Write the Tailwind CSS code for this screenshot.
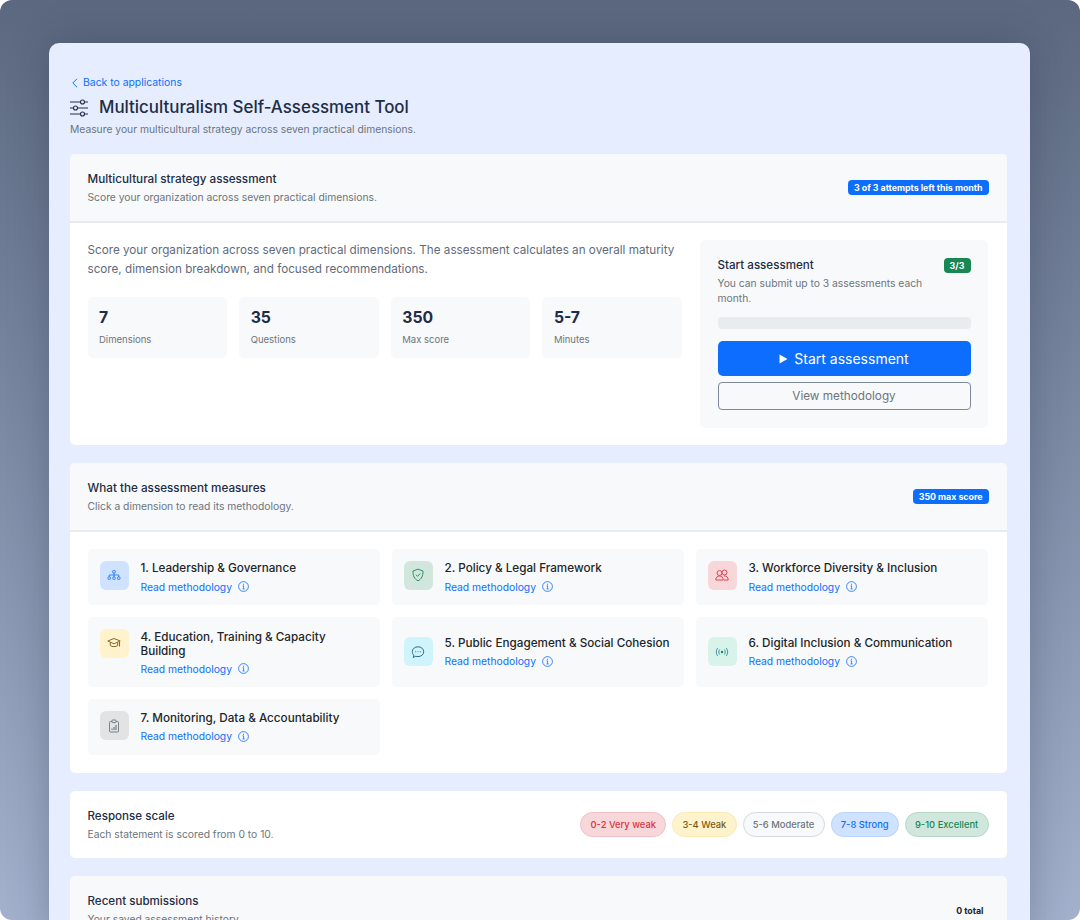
<!DOCTYPE html>
<html lang="en">

<head>
  <meta charset="UTF-8">
  <meta name="viewport" content="width=device-width, initial-scale=1">
  <script src="https://cdn.jsdelivr.net/npm/@tailwindcss/browser@4"></script>
  <title>Multiculturalism Self-Assessment Tool</title>
</head>

<body class="bg-white font-['Inter',sans-serif]">
  <div class="w-[1080px] h-[920px] overflow-hidden rounded-[12px] bg-gradient-to-b from-[#5b6880] to-[#a3b1cd] pt-[43px] pl-[49px]">
    <div class="w-[981px] min-h-[900px] rounded-t-[10px] bg-[#e6edff] pl-[21px] pr-[23px] pt-[33px] shadow-[0_0_40px_rgba(30,41,59,0.3)]">

      <a class="flex items-center gap-[4px] h-[13px] text-[10.4px] leading-[13px] text-[#0d6efd]">
        <svg class="w-[8px] h-[10px] ml-[1px]" viewBox="0 0 8 10" fill="none" stroke="#0d6efd" stroke-width="1"><path d="M6 .8 1.800 5 6 9.200" /></svg>
        Back to applications
      </a>
      <div class="flex items-center gap-[11px] mt-[7px] h-[23px]">
        <svg class="w-[18px] h-[18px]" viewBox="0 0 18 18" fill="none" stroke="#212c45" stroke-width="1.100">
          <path d="M0 3h10.500M14.500 3H18M0 9h3.500M7.500 9H18M0 15h10.500M14.500 15H18" />
          <circle cx="12.500" cy="3" r="2" />
          <circle cx="5.500" cy="9" r="2" />
          <circle cx="12.500" cy="15" r="2" />
        </svg>
        <h1 class="text-[16.9px] leading-[23px] font-medium text-[#212c45]">Multiculturalism Self-Assessment Tool</h1>
      </div>
      <p class="mt-[3px] text-[10.3px] leading-[14px] text-[#6c757d]">Measure your multicultural strategy across seven practical dimensions.</p>

      <!-- assessment intro -->
      <section class="mt-[18px] bg-white rounded-[5px] overflow-hidden">
        <div class="h-[69px] bg-[#f8f9fa] border-b-2 border-[#e9ecef] pl-[17.5px] pr-[18.5px] flex items-center justify-between">
          <div>
            <h2 class="text-[11.7px] leading-[16px] font-medium text-[#212c45]">Multicultural strategy assessment</h2>
            <p class="mt-[3px] text-[10.3px] leading-[14px] text-[#6c757d]">Score your organization across seven practical dimensions.</p>
          </div>
          <span class="h-[15px] px-[6px] rounded-[4px] bg-[#0d6efd] text-white text-[8.8px] leading-[15px] font-bold">3 of 3 attempts left this month</span>
        </div>
        <div class="flex gap-[18px] pt-[16.5px] px-[17.5px] pb-[17.5px]">
          <div class="w-[594.5px]">
            <p class="mt-[1px] text-[11.7px] leading-[19px] text-[#5f6b7c]">Score your organization across seven practical dimensions. The assessment calculates an overall maturity score, dimension breakdown, and focused recommendations.</p>
            <div class="grid grid-cols-4 gap-[12px] mt-[18px]">
              <div class="h-[61px] rounded-[5px] bg-[#f8f9fa] pl-[11.5px] pt-[10px]">
                <div class="text-[15.75px] leading-[21px] font-bold text-[#212c45]">7</div>
                <div class="mt-[5px] text-[9.5px] leading-[13px] text-[#6c757d]">Dimensions</div>
              </div>
              <div class="h-[61px] rounded-[5px] bg-[#f8f9fa] pl-[11.5px] pt-[10px]">
                <div class="text-[15.75px] leading-[21px] font-bold text-[#212c45]">35</div>
                <div class="mt-[5px] text-[9.5px] leading-[13px] text-[#6c757d]">Questions</div>
              </div>
              <div class="h-[61px] rounded-[5px] bg-[#f8f9fa] pl-[11.5px] pt-[10px]">
                <div class="text-[15.75px] leading-[21px] font-bold text-[#212c45]">350</div>
                <div class="mt-[5px] text-[9.5px] leading-[13px] text-[#6c757d]">Max score</div>
              </div>
              <div class="h-[61px] rounded-[5px] bg-[#f8f9fa] pl-[11.5px] pt-[10px]">
                <div class="text-[15.75px] leading-[21px] font-bold text-[#212c45]">5-7</div>
                <div class="mt-[5px] text-[9.5px] leading-[13px] text-[#6c757d]">Minutes</div>
              </div>
            </div>
          </div>
          <div class="w-[288px] h-[188px] rounded-[5px] bg-[#f8f9fa] px-[17.5px] pt-[19.5px]">
            <div class="flex items-start justify-between">
              <div class="w-[216px]">
                <h3 class="text-[11.6px] leading-[15px] font-medium text-[#212c45] mt-[-1px]">Start assessment</h3>
                <p class="mt-[3px] text-[10.3px] leading-[15px] text-[#6c757d]">You can submit up to 3 assessments each month.</p>
              </div>
              <span class="mt-[-1px] h-[15px] w-[27px] text-center rounded-[4px] bg-[#198754] text-white text-[8.8px] leading-[15px] font-bold">3/3</span>
            </div>
            <div class="mt-[11px] h-[12px] rounded-[4px] bg-[#e9ecef]"></div>
            <button class="mt-[12px] w-full h-[35px] rounded-[5px] bg-[#0d6efd] text-white text-[14px] flex items-center justify-center gap-[6px]">
              <svg class="w-[9px] h-[10px]" viewBox="0 0 9 10" fill="#fff"><path d="M.5.500 8.500 5 .5 9.500z" /></svg>
              Start assessment
            </button>
            <button class="mt-[6px] w-full h-[28px] pt-[1px] rounded-[4px] border border-[#7f8896] text-[#6c757d] text-[11.75px]">View methodology</button>
          </div>
        </div>
      </section>

      <!-- dimensions -->
      <section class="mt-[18px] bg-white rounded-[5px] overflow-hidden">
        <div class="h-[69px] bg-[#f8f9fa] border-b-2 border-[#e9ecef] pl-[17.5px] pr-[18.5px] flex items-center justify-between">
          <div>
            <h2 class="text-[11.7px] leading-[16px] font-medium text-[#212c45]">What the assessment measures</h2>
            <p class="mt-[3px] text-[10.3px] leading-[14px] text-[#6c757d]">Click a dimension to read its methodology.</p>
          </div>
          <span class="h-[15px] px-[6px] rounded-[4px] bg-[#0d6efd] text-white text-[8.8px] leading-[15px] font-bold">350 max score</span>
        </div>
        <div class="grid grid-cols-[292px_292px_292px] gap-[12px] pt-[16.5px] px-[17.5px] pb-[18px]">

          <div class="h-[56px] rounded-[5px] bg-[#f8f9fa] flex items-start gap-[12px] p-[12px]">
            <div class="w-[29px] h-[29px] shrink-0 rounded-[6px] bg-[#cfe2ff] flex items-center justify-center">
              <svg class="w-[14px] h-[14px]" viewBox="0 0 14 14" fill="none" stroke="#0d6efd" stroke-width=".8"><rect x="5.700" y="2.500" width="2.600" height="2.400" rx=".6" /><rect x="1" y="9" width="2.400" height="2.400" rx=".6" /><rect x="5.800" y="9" width="2.400" height="2.400" rx=".6" /><rect x="10.600" y="9" width="2.400" height="2.400" rx=".6" /><path d="M7 4.900V9M2.200 9V7h9.600v2" /></svg>
            </div>
            <div>
              <h4 class="text-[11.7px] leading-[14px] font-medium text-[#212529]">1. Leadership &amp; Governance</h4>
              <a class="mt-[5px] flex items-center gap-[6px] text-[10.3px] leading-[14px] text-[#0d6efd]">Read methodology
                <svg class="w-[11px] h-[11px]" viewBox="0 0 11 11" fill="none" stroke="#0d6efd" stroke-width=".8"><circle cx="5.500" cy="5.500" r="4.900" /><path d="M4.500 4.800h1.100v3M4.500 7.900h2.200" /><path d="M5.500 2.800v.9" stroke-width="1" /></svg>
              </a>
            </div>
          </div>

          <div class="h-[56px] rounded-[5px] bg-[#f8f9fa] flex items-start gap-[12px] p-[12px]">
            <div class="w-[29px] h-[29px] shrink-0 rounded-[6px] bg-[#d1e7dd] flex items-center justify-center">
              <svg class="w-[14px] h-[14px]" viewBox="0 0 14 14" fill="none" stroke="#198754" stroke-width=".9"><path d="M7 1.200 12 3c.2 4.600-1.300 8-5 9.800C3.300 11 1.800 7.600 2 3z" /><path d="M5 6.800 6.500 8.300 9.200 5.500" /></svg>
            </div>
            <div>
              <h4 class="text-[11.7px] leading-[14px] font-medium text-[#212529]">2. Policy &amp; Legal Framework</h4>
              <a class="mt-[5px] flex items-center gap-[6px] text-[10.3px] leading-[14px] text-[#0d6efd]">Read methodology
                <svg class="w-[11px] h-[11px]" viewBox="0 0 11 11" fill="none" stroke="#0d6efd" stroke-width=".8"><circle cx="5.500" cy="5.500" r="4.900" /><path d="M4.500 4.800h1.100v3M4.500 7.900h2.200" /><path d="M5.500 2.800v.9" stroke-width="1" /></svg>
              </a>
            </div>
          </div>

          <div class="h-[56px] rounded-[5px] bg-[#f8f9fa] flex items-start gap-[12px] p-[12px]">
            <div class="w-[29px] h-[29px] shrink-0 rounded-[6px] bg-[#f8d7da] flex items-center justify-center">
              <svg class="w-[14px] h-[14px]" viewBox="0 0 14 14" fill="none" stroke="#dc3545" stroke-width=".9"><circle cx="4.500" cy="5" r="2.500" /><circle cx="9.500" cy="4.500" r="2.500" /><path d="M.8 12c0-2.500 1.500-4 3.700-4s3.700 1.500 3.700 4zM8.800 8c2.600-.5 4.400 1.300 4.400 4H8.800" /></svg>
            </div>
            <div>
              <h4 class="text-[11.7px] leading-[14px] font-medium text-[#212529]">3. Workforce Diversity &amp; Inclusion</h4>
              <a class="mt-[5px] flex items-center gap-[6px] text-[10.3px] leading-[14px] text-[#0d6efd]">Read methodology
                <svg class="w-[11px] h-[11px]" viewBox="0 0 11 11" fill="none" stroke="#0d6efd" stroke-width=".8"><circle cx="5.500" cy="5.500" r="4.900" /><path d="M4.500 4.800h1.100v3M4.500 7.900h2.200" /><path d="M5.500 2.800v.9" stroke-width="1" /></svg>
              </a>
            </div>
          </div>

          <div class="h-[70.5px] rounded-[5px] bg-[#f8f9fa] flex items-start gap-[12px] p-[12px]">
            <div class="w-[29px] h-[29px] shrink-0 rounded-[6px] bg-[#fff3cd] flex items-center justify-center">
              <svg class="w-[14px] h-[14px]" viewBox="0 0 14 14" fill="none" stroke="#7a5b12" stroke-width=".9"><path d="M.8 5 7 2.500 13.200 5 7 7.800z" /><path d="M3.300 6.500v3C5 11 9 11 10.700 9.500v-3" /><path d="M12.500 5.500v5" stroke="#c0561b" stroke-width="1.100" /></svg>
            </div>
            <div class="mt-[1px]">
              <h4 class="text-[11.7px] leading-[14px] font-medium text-[#212529]">4. Education, Training &amp; Capacity Building</h4>
              <a class="mt-[4px] flex items-center gap-[6px] text-[10.3px] leading-[14px] text-[#0d6efd]">Read methodology
                <svg class="w-[11px] h-[11px]" viewBox="0 0 11 11" fill="none" stroke="#0d6efd" stroke-width=".8"><circle cx="5.500" cy="5.500" r="4.900" /><path d="M4.500 4.800h1.100v3M4.500 7.900h2.200" /><path d="M5.500 2.800v.9" stroke-width="1" /></svg>
              </a>
            </div>
          </div>

          <div class="h-[70.5px] rounded-[5px] bg-[#f8f9fa] flex items-center gap-[12px] px-[12px]">
            <div class="w-[29px] h-[29px] shrink-0 rounded-[6px] bg-[#cff4fc] flex items-center justify-center">
              <svg class="w-[14px] h-[14px]" viewBox="0 0 14 14" fill="none" stroke="#1b5d78" stroke-width=".9"><path d="M7 1.800c3.300 0 5.700 2.100 5.700 4.900S10.300 11.600 7 11.600c-.8 0-1.500-.1-2.200-.3L2.300 12.500l.5-2.400C1.900 9.200 1.300 8 1.300 6.700 1.300 3.900 3.700 1.800 7 1.800z" /><path d="M4.300 6.800h.8M6.600 6.800h.8M8.900 6.800h.8" stroke-width="1.100" /></svg>
            </div>
            <div>
              <h4 class="text-[11.7px] leading-[14px] font-medium text-[#212529]">5. Public Engagement &amp; Social Cohesion</h4>
              <a class="mt-[4.5px] flex items-center gap-[6px] text-[10.3px] leading-[14px] text-[#0d6efd]">Read methodology
                <svg class="w-[11px] h-[11px]" viewBox="0 0 11 11" fill="none" stroke="#0d6efd" stroke-width=".8"><circle cx="5.500" cy="5.500" r="4.900" /><path d="M4.500 4.800h1.100v3M4.500 7.900h2.200" /><path d="M5.500 2.800v.9" stroke-width="1" /></svg>
              </a>
            </div>
          </div>

          <div class="h-[70.5px] rounded-[5px] bg-[#f8f9fa] flex items-center gap-[12px] px-[12px]">
            <div class="w-[29px] h-[29px] shrink-0 rounded-[6px] bg-[#d8f3e9] flex items-center justify-center">
              <svg class="w-[14px] h-[14px]" viewBox="0 0 14 14" fill="none" stroke="#20906a" stroke-width=".9"><circle cx="7" cy="7" r="1.200" fill="#20806a" stroke="none" /><path d="M4.700 4.500c-1.200 1.400-1.200 3.600 0 5M9.300 4.500c1.200 1.400 1.200 3.600 0 5" /><path d="M2.800 3c-2 2.200-2 5.800 0 8M11.200 3c2 2.200 2 5.800 0 8" stroke="#3b82b8" /></svg>
            </div>
            <div>
              <h4 class="text-[11.7px] leading-[14px] font-medium text-[#212529]">6. Digital Inclusion &amp; Communication</h4>
              <a class="mt-[4.5px] flex items-center gap-[6px] text-[10.3px] leading-[14px] text-[#0d6efd]">Read methodology
                <svg class="w-[11px] h-[11px]" viewBox="0 0 11 11" fill="none" stroke="#0d6efd" stroke-width=".8"><circle cx="5.500" cy="5.500" r="4.900" /><path d="M4.500 4.800h1.100v3M4.500 7.900h2.200" /><path d="M5.500 2.800v.9" stroke-width="1" /></svg>
              </a>
            </div>
          </div>

          <div class="h-[56px] rounded-[5px] bg-[#f8f9fa] flex items-start gap-[12px] p-[12px]">
            <div class="w-[29px] h-[29px] shrink-0 rounded-[6px] bg-[#e2e3e5] flex items-center justify-center">
              <svg class="w-[14px] h-[14px]" viewBox="0 0 14 14" fill="none" stroke="#6c757d" stroke-width=".9"><rect x="2.500" y="2.500" width="9" height="10.500" rx="1" /><rect x="5" y="1" width="4" height="2.600" rx=".6" fill="#e2e3e5" /><path d="M5 11V9.500M7 11V8M9 11V6" stroke-width="1.100" /></svg>
            </div>
            <div>
              <h4 class="text-[11.7px] leading-[14px] font-medium text-[#212529]">7. Monitoring, Data &amp; Accountability</h4>
              <a class="mt-[4px] flex items-center gap-[6px] text-[10.3px] leading-[14px] text-[#0d6efd]">Read methodology
                <svg class="w-[11px] h-[11px]" viewBox="0 0 11 11" fill="none" stroke="#0d6efd" stroke-width=".8"><circle cx="5.500" cy="5.500" r="4.900" /><path d="M4.500 4.800h1.100v3M4.500 7.900h2.200" /><path d="M5.500 2.800v.9" stroke-width="1" /></svg>
              </a>
            </div>
          </div>
        </div>
      </section>

      <!-- scale -->
      <section class="mt-[18px] h-[67px] bg-white rounded-[5px] pl-[17.5px] pr-[18.5px] flex items-center justify-between">
        <div>
          <h2 class="text-[11.6px] leading-[16px] font-medium text-[#212c45]">Response scale</h2>
          <p class="mt-[3px] text-[10.3px] leading-[14px] text-[#6c757d]">Each statement is scored from 0 to 10.</p>
        </div>
        <div class="flex gap-[6px]">
          <span class="h-[25px] px-[9.2px] rounded-full border border-[#f1c0c5] bg-[#f8d7da] text-[#dc3545] text-[9.4px] leading-[23px] font-medium">0-2 Very weak</span>
          <span class="h-[25px] px-[9.2px] rounded-full border border-[#fdeab0] bg-[#fff3cd] text-[#7a5b12] text-[9.4px] leading-[23px] font-medium">3-4 Weak</span>
          <span class="h-[25px] px-[9.2px] rounded-full border border-[#d5d9de] bg-[#f8f9fa] text-[#6c757d] text-[9.4px] leading-[23px] font-medium">5-6 Moderate</span>
          <span class="h-[25px] px-[9.2px] rounded-full border border-[#b6d4fe] bg-[#cfe2ff] text-[#0d6efd] text-[9.4px] leading-[23px] font-medium">7-8 Strong</span>
          <span class="h-[25px] px-[9.2px] rounded-full border border-[#b5d8c7] bg-[#d1e7dd] text-[#198754] text-[9.4px] leading-[23px] font-medium">9-10 Excellent</span>
        </div>
      </section>

      <!-- history -->
      <section class="mt-[18px] h-[68px] bg-[#f8f9fa] rounded-t-[5px] px-[17.5px] pt-[17px] flex items-start justify-between">
        <div>
          <h2 class="text-[11.6px] leading-[16px] font-medium text-[#212c45]">Recent submissions</h2>
          <p class="mt-[3px] text-[10.3px] leading-[14px] text-[#6c757d]">Your saved assessment history.</p>
        </div>
        <span class="mt-[10px] pr-[6px] text-[8.8px] leading-[15px] font-bold text-[#212529]">0 total</span>
      </section>
    </div>
  </div>
</body>

</html>
